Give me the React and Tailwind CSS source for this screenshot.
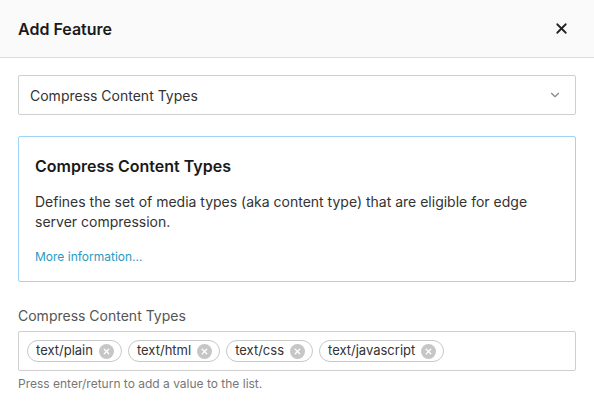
import { X, ChevronDown } from "lucide-react";

const tags = ["text/plain", "text/html", "text/css", "text/javascript"];

function Tag({ label }) {
    return (
        <span className="flex items-center gap-[6px] h-[22px] rounded-full border border-[#c8c8c8] pl-[8px] pr-[7px] text-[13px] text-[#333]">
            {label}
            <span className="flex h-[15px] w-[15px] items-center justify-center rounded-full bg-[#c6c6c6]">
                <X className="h-[9px] w-[9px] text-white" strokeWidth={3.5} />
            </span>
        </span>
    );
}

export default function App() {
    return (
        <div className="w-[594px] h-[408px] bg-white font-['Inter',sans-serif] text-[#222]">
            {/* Header */}
            <div className="flex items-center justify-between h-[58px] px-[18px] bg-[#fafafa] border-b border-[#dcdcdc]">
                <h2 className="text-[16px] font-semibold text-[#1a1a1a]">Add Feature</h2>
                <button className="mr-[6px]">
                    <X className="h-[17px] w-[17px] text-[#222]" strokeWidth={2.5} />
                </button>
            </div>

            <div className="px-[18px] pt-[17px]">
                {/* Select */}
                <div className="flex items-center justify-between h-[40px] rounded-[2px] border border-[#cfcfcf] pl-[11px] pr-[13px]">
                    <span className="text-[14px] text-[#333]">Compress Content Types</span>
                    <ChevronDown className="h-[14px] w-[14px] text-[#888]" strokeWidth={2} />
                </div>

                {/* Info card */}
                <div className="mt-[21px] h-[146px] rounded-[2px] border border-[#9dd4f7] px-[16px] pt-[17px]">
                    <h3 className="text-[16px] font-semibold text-[#1a1a1a] leading-[24px]">Compress Content Types</h3>
                    <p className="mt-[14px] text-[14px] leading-[20px] text-[#333]">
                        Defines the set of media types (aka content type) that are eligible for edge server compression.
                    </p>
                    <a className="block mt-[16px] text-[12px] text-[#2b9ac0]">More information...</a>
                </div>

                {/* Tag input */}
                <label className="block mt-[24px] text-[14px] text-[#555] leading-[20px]">Compress Content Types</label>
                <div className="mt-[5px] flex items-center gap-[6px] h-[40px] rounded-[2px] border border-[#cfcfcf] px-[8px]">
                    {tags.map((t) => (
                        <Tag key={t} label={t} />
                    ))}
                </div>
                <p className="mt-[4px] text-[12px] text-[#777]">Press enter/return to add a value to the list.</p>
            </div>
        </div>
    );
}
